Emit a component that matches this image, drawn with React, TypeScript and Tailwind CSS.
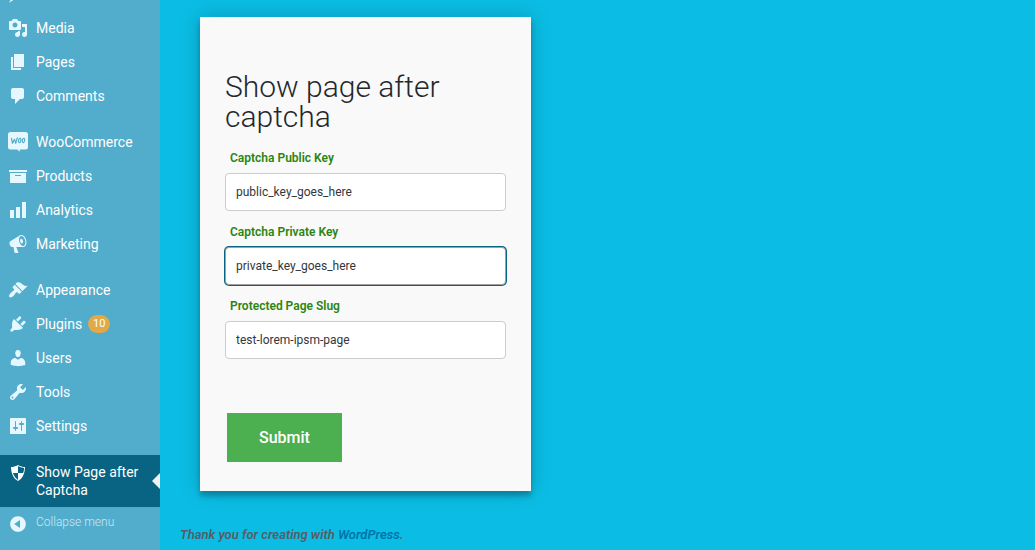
type MenuItem = { label: string; path: string; badge?: number };

const icons = {
  pin: "M10.44 3.02l1.82-1.82 6.36 6.35-1.83 1.82c-1.05-.68-2.48-.57-3.41.36l-.75.75c-.92.93-1.04 2.35-.35 3.41l-1.83 1.82-2.41-2.41-2.8 2.79c-.42.42-3.38 2.71-3.8 2.29s1.86-3.39 2.28-3.81l2.79-2.79L4.1 9.36l1.83-1.82c1.05.69 2.48.57 3.4-.36l.75-.75c.93-.92 1.05-2.35.36-3.41z",
  media:
    "M13 11V4c0-.55-.45-1-1-1h-1.67L9 1H5L3.67 3H2c-.55 0-1 .45-1 1v7c0 .55.45 1 1 1h10c.55 0 1-.45 1-1zM7 4.5c1.38 0 2.5 1.12 2.5 2.5S8.38 9.5 7 9.5 4.5 8.38 4.5 7 5.62 4.5 7 4.5zM14 6h5v10.5c0 1.38-1.12 2.5-2.5 2.5S14 17.88 14 16.5s1.12-2.5 2.5-2.5c.17 0 .34.02.5.05V9h-3V6zm-4 8.05V13h2v3.5c0 1.38-1.12 2.5-2.5 2.5S7 17.88 7 16.5 8.12 14 9.5 14c.17 0 .34.02.5.05z",
  page: "M6 15V2h10v13H6zm-1 1h8v2H3V5h2v11z",
  comments:
    "M5 2h9c1.1 0 2 .9 2 2v7c0 1.1-.9 2-2 2h-2l-5 5v-5H5c-1.1 0-2-.9-2-2V4c0-1.1.9-2 2-2z",
  woo: "M2.500 0h15A2.500 2.500 0 0 1 20 2.500V15a2.500 2.500 0 0 1-2.500 2.500H11.800V19.800L9.300 17.500H2.500A2.500 2.500 0 0 1 0 15V2.500A2.500 2.500 0 0 1 2.500 0z",
  archive: "M19 4v2H1V4h18zM2 7h16v10H2V7zm11 3V9H7v1h6z",
  chart: "M18 18V2h-4v16h4zm-6 0V7H8v11h4zm-6 0v-8H2v8h4z",
  megaphone:
    "M18.15 5.94c.46 1.62.38 3.22-.02 4.48-.42 1.28-1.26 2.18-2.3 2.48-.16.06-.26.06-.4.06-.06.02-.12.02-.18.02-.06.02-.14.02-.22.02h-6.8l2.22 5.5c.02.14-.06.26-.14.34-.08.1-.24.16-.34.16H6.95c-.1 0-.26-.06-.34-.16-.08-.08-.16-.2-.14-.34l-1-5.5H4.25l-.02-.02c-.5.06-1.08-.18-1.54-.62s-.88-1.08-1.06-1.88c-.24-.8-.2-1.56-.02-2.2.18-.62.58-1.08 1.06-1.3l.02-.02 9-5.4c.1-.06.18-.1.24-.16.06-.04.14-.08.24-.12.16-.08.28-.12.5-.18 1.04-.3 2.24.1 3.22.98s1.84 2.24 2.26 3.86zm-2.58 5.98h-.02c.4-.1.74-.34 1.04-.7.58-.7.86-1.76.86-3.04 0-.64-.1-1.3-.28-1.98-.34-1.36-1.02-2.5-1.78-3.24s-1.68-1.1-2.46-.88c-.82.22-1.4.96-1.7 2-.32 1.04-.28 2.36.06 3.72.38 1.36 1 2.5 1.8 3.24.78.74 1.62 1.1 2.48.88zm-2.54-7.08c.22-.04.42-.02.62.04.38.16.76.48 1.02 1s.42 1.2.42 1.78c0 .3-.04.56-.12.8-.18.48-.44.84-.86.94-.34.1-.8-.06-1.14-.4s-.64-.86-.78-1.5c-.18-.62-.12-1.24.02-1.72s.48-.84.82-.94z",
  appearance:
    "M14.48 11.06L7.41 3.99l1.5-1.5c.5-.56 2.3-.47 3.51.32 1.21.8 1.43 1.28 2.91 2.1 1.18.64 2.45 1.26 4.45.85zm-.71.71L6.7 4.7 4.93 6.47c-.39.39-.39 1.02 0 1.41l1.06 1.06c.39.39.39 1.03 0 1.42-.6.6-1.43 1.11-2.21 1.69-.35.26-.7.53-1.01.84C1.43 14.23.4 16.08 1.4 17.07c.99 1 2.84-.03 4.18-1.36.31-.31.58-.66.85-1.02.57-.78 1.08-1.61 1.69-2.21.39-.39 1.02-.39 1.41 0l1.06 1.06c.39.39 1.02.39 1.41 0z",
  plugins:
    "M13.11 4.36L9.87 7.6 8 5.73l3.24-3.24c.35-.34 1.05-.2 1.56.32.52.51.66 1.21.31 1.55zm-8 1.77l.91-1.12 9.01 9.01-1.19.84c-.71.71-2.63 1.16-3.82 1.16H6.14L4.9 17.26c-.59.59-1.54.59-2.12 0-.59-.58-.59-1.53 0-2.12l1.24-1.24v-3.88c0-1.13.4-3.19 1.09-3.89zm7.26 3.97l3.24-3.24c.34-.35 1.04-.21 1.55.31.52.51.66 1.21.31 1.55l-3.24 3.25z",
  users:
    "M10 9.25c-2.27 0-2.73-3.44-2.73-3.44C7 4.02 7.82 2 9.97 2c2.16 0 2.98 2.02 2.71 3.81 0 0-.41 3.44-2.68 3.44zm0 2.57L12.72 10c2.39 0 4.52 2.33 4.52 4.53v2.49s-3.65 1.13-7.24 1.13c-3.65 0-7.24-1.13-7.24-1.13v-2.49c0-2.25 1.94-4.48 4.47-4.48z",
  tools:
    "M16.68 9.77c-1.34 1.34-3.3 1.67-4.95.99l-5.41 6.52c-.99.99-2.59.99-3.58 0s-.99-2.59 0-3.57l6.52-5.42c-.68-1.65-.35-3.61.99-4.95 1.28-1.28 3.12-1.62 4.72-1.06l-2.89 2.89 2.82 2.82 2.86-2.87c.53 1.58.18 3.39-1.08 4.65zM3.81 16.21c.4.39 1.04.39 1.43 0 .4-.4.4-1.04 0-1.43-.39-.4-1.03-.4-1.43 0-.39.39-.39 1.03 0 1.43z",
  settings:
    "M18 17V3c0-.55-.45-1-1-1H3c-.55 0-1 .45-1 1v14c0 .55.45 1 1 1h14c.55 0 1-.45 1-1zM8 11h1c.55 0 1 .45 1 1s-.45 1-1 1H8v1.500c0 .28-.22.5-.5.5s-.5-.22-.5-.5V13H6c-.55 0-1-.45-1-1s.45-1 1-1h1V5.500c0-.28.22-.5.5-.5s.5.22.5.5V11zm5-2h-1c-.55 0-1-.45-1-1s.45-1 1-1h1V5.500c0-.28.22-.5.5-.5s.5.22.5.5V7h1c.55 0 1 .45 1 1s-.45 1-1 1h-1v5.500c0 .28-.22.5-.5.5s-.5-.22-.5-.5V9z",
  shield:
    "M10 2s3 2 7 2c0 11-7 14-7 14S3 15 3 4c4 0 7-2 7-2zm0 8h5s1-1 1-5c0 0-5-1-6-2v7H5c1 4 5 7 5 7v-7z",
  collapse:
    "M10 2.16c4.33 0 7.84 3.51 7.84 7.84s-3.51 7.84-7.84 7.84S2.16 14.33 2.16 10 5.71 2.16 10 2.16zm2 11.72V6.12L6.18 9.97z",
};

const groups: MenuItem[][] = [
  [
    { label: "Media", path: icons.media },
    { label: "Pages", path: icons.page },
    { label: "Comments", path: icons.comments },
  ],
  [
    { label: "WooCommerce", path: icons.woo },
    { label: "Products", path: icons.archive },
    { label: "Analytics", path: icons.chart },
    { label: "Marketing", path: icons.megaphone },
  ],
  [
    { label: "Appearance", path: icons.appearance },
    { label: "Plugins", path: icons.plugins, badge: 10 },
    { label: "Users", path: icons.users },
    { label: "Tools", path: icons.tools },
    { label: "Settings", path: icons.settings },
  ],
];

const fields = [
  { id: "public-key", label: "Captcha Public Key", value: "public_key_goes_here", active: false },
  { id: "private-key", label: "Captcha Private Key", value: "private_key_goes_here", active: true },
  { id: "page-slug", label: "Protected Page Slug", value: "test-lorem-ipsm-page", active: false },
];

function Icon({ path }: { path: string }) {
  return (
    <svg viewBox="0 0 20 20" className="size-5 shrink-0 fill-current" fillRule="evenodd" aria-hidden="true">
      <path d={path} />
      {path === icons.woo && (
        // Hand-drawn wordmark inside the speech bubble
        <g fill="none" stroke="#52accc" strokeWidth="1.200" strokeLinecap="round" strokeLinejoin="round">
          <path d="M3.500 6.300l1 5 2-4 1.200 4L9.300 5.800" />
          <ellipse cx="11.700" cy="8.500" rx="1.200" ry="2.200" transform="rotate(12 11.700 8.500)" />
          <ellipse cx="15.500" cy="8.500" rx="1.200" ry="2.200" transform="rotate(12 15.500 8.500)" />
        </g>
      )}
    </svg>
  );
}

function Sidebar() {
  return (
    <nav aria-label="Main menu" className="w-40 shrink-0 bg-[#52accc] text-sm leading-[18px] text-white">
      <a href="#posts" aria-label="Posts" className="flex h-[11px] items-end overflow-hidden pb-[7px] pl-2 text-[#e5f8ff]">
        <Icon path={icons.pin} />
      </a>
      <div className="flex flex-col gap-3">
        {groups.map((group) => (
          <ul key={group[0].label}>
            {group.map((item) => (
              <li key={item.label}>
                <a href={"#" + item.label.toLowerCase()} className="flex h-[34px] items-center gap-2 pl-2">
                  <span className="text-[#e5f8ff]">
                    <Icon path={item.path} />
                  </span>
                  <span>{item.label}</span>
                  {item.badge && (
                    <span className="-ml-0.5 w-[22px] rounded-full bg-[#e1a948] text-center text-[11px]">
                      {item.badge}
                    </span>
                  )}
                </a>
              </li>
            ))}
          </ul>
        ))}
        <a href="#captcha" aria-current="page" className="relative flex items-start gap-2 bg-[#096484] py-2 pr-3 pl-2">
          <Icon path={icons.shield} />
          <span>Show Page after Captcha</span>
          <span className="absolute top-1/2 right-0 -translate-y-1/2 border-8 border-l-0 border-transparent border-r-[#f1f1f1]" />
        </a>
      </div>
      <button type="button" className="flex w-full items-start gap-2 pt-[7px] pl-2 text-left text-xs text-[#e5f8ff]">
        <Icon path={icons.collapse} />
        <span className="leading-4 font-light opacity-80">Collapse menu</span>
      </button>
    </nav>
  );
}

export default function App() {
  return (
    <div className="flex min-h-screen bg-[#0bbde4] font-['Roboto',sans-serif]">
      <Sidebar />
      <div className="flex min-w-0 flex-1 flex-col px-5 pt-[17px] pb-[5px]">
        <main className="px-5">
          <form
            onSubmit={(e) => e.preventDefault()}
            className="w-full max-w-[331px] bg-[#f9f9f9] px-[25px] pt-[55px] pb-[29px] shadow-[0_0_20px_rgba(0,0,0,0.2),0_5px_5px_rgba(0,0,0,0.24)]"
          >
            <h1 className="text-[30px] leading-[30px] font-light text-[#23282d]">Show page after captcha</h1>
            <div className="mt-4 flex flex-col gap-[11px]">
              {fields.map((f) => (
                <div key={f.id} className="flex flex-col gap-[5px]">
                  <label htmlFor={f.id} className="pl-[5px] text-xs leading-5 font-semibold text-[#2a8510]">
                    {f.label}
                  </label>
                  <input
                    id={f.id}
                    type="text"
                    defaultValue={f.value}
                    className={
                      "h-[38px] w-full rounded border bg-white px-2.5 text-xs text-[#32373c] outline-none " +
                      (f.active ? "border-[#a0a0a0] ring-1 ring-[#096484]" : "border-[#cccccc]")
                    }
                  />
                </div>
              ))}
            </div>
            <button type="submit" className="mt-[54px] ml-0.5 h-[49px] bg-[#4caf50] px-8 text-base font-medium text-white">
              Submit
            </button>
          </form>
        </main>
        <footer className="mt-auto text-[13px] leading-5 font-semibold text-[#555d66] italic">
          Thank you for creating with{" "}
          <a href="https://wordpress.org/" className="text-[#0073aa]">
            WordPress
          </a>
          .
        </footer>
      </div>
    </div>
  );
}
